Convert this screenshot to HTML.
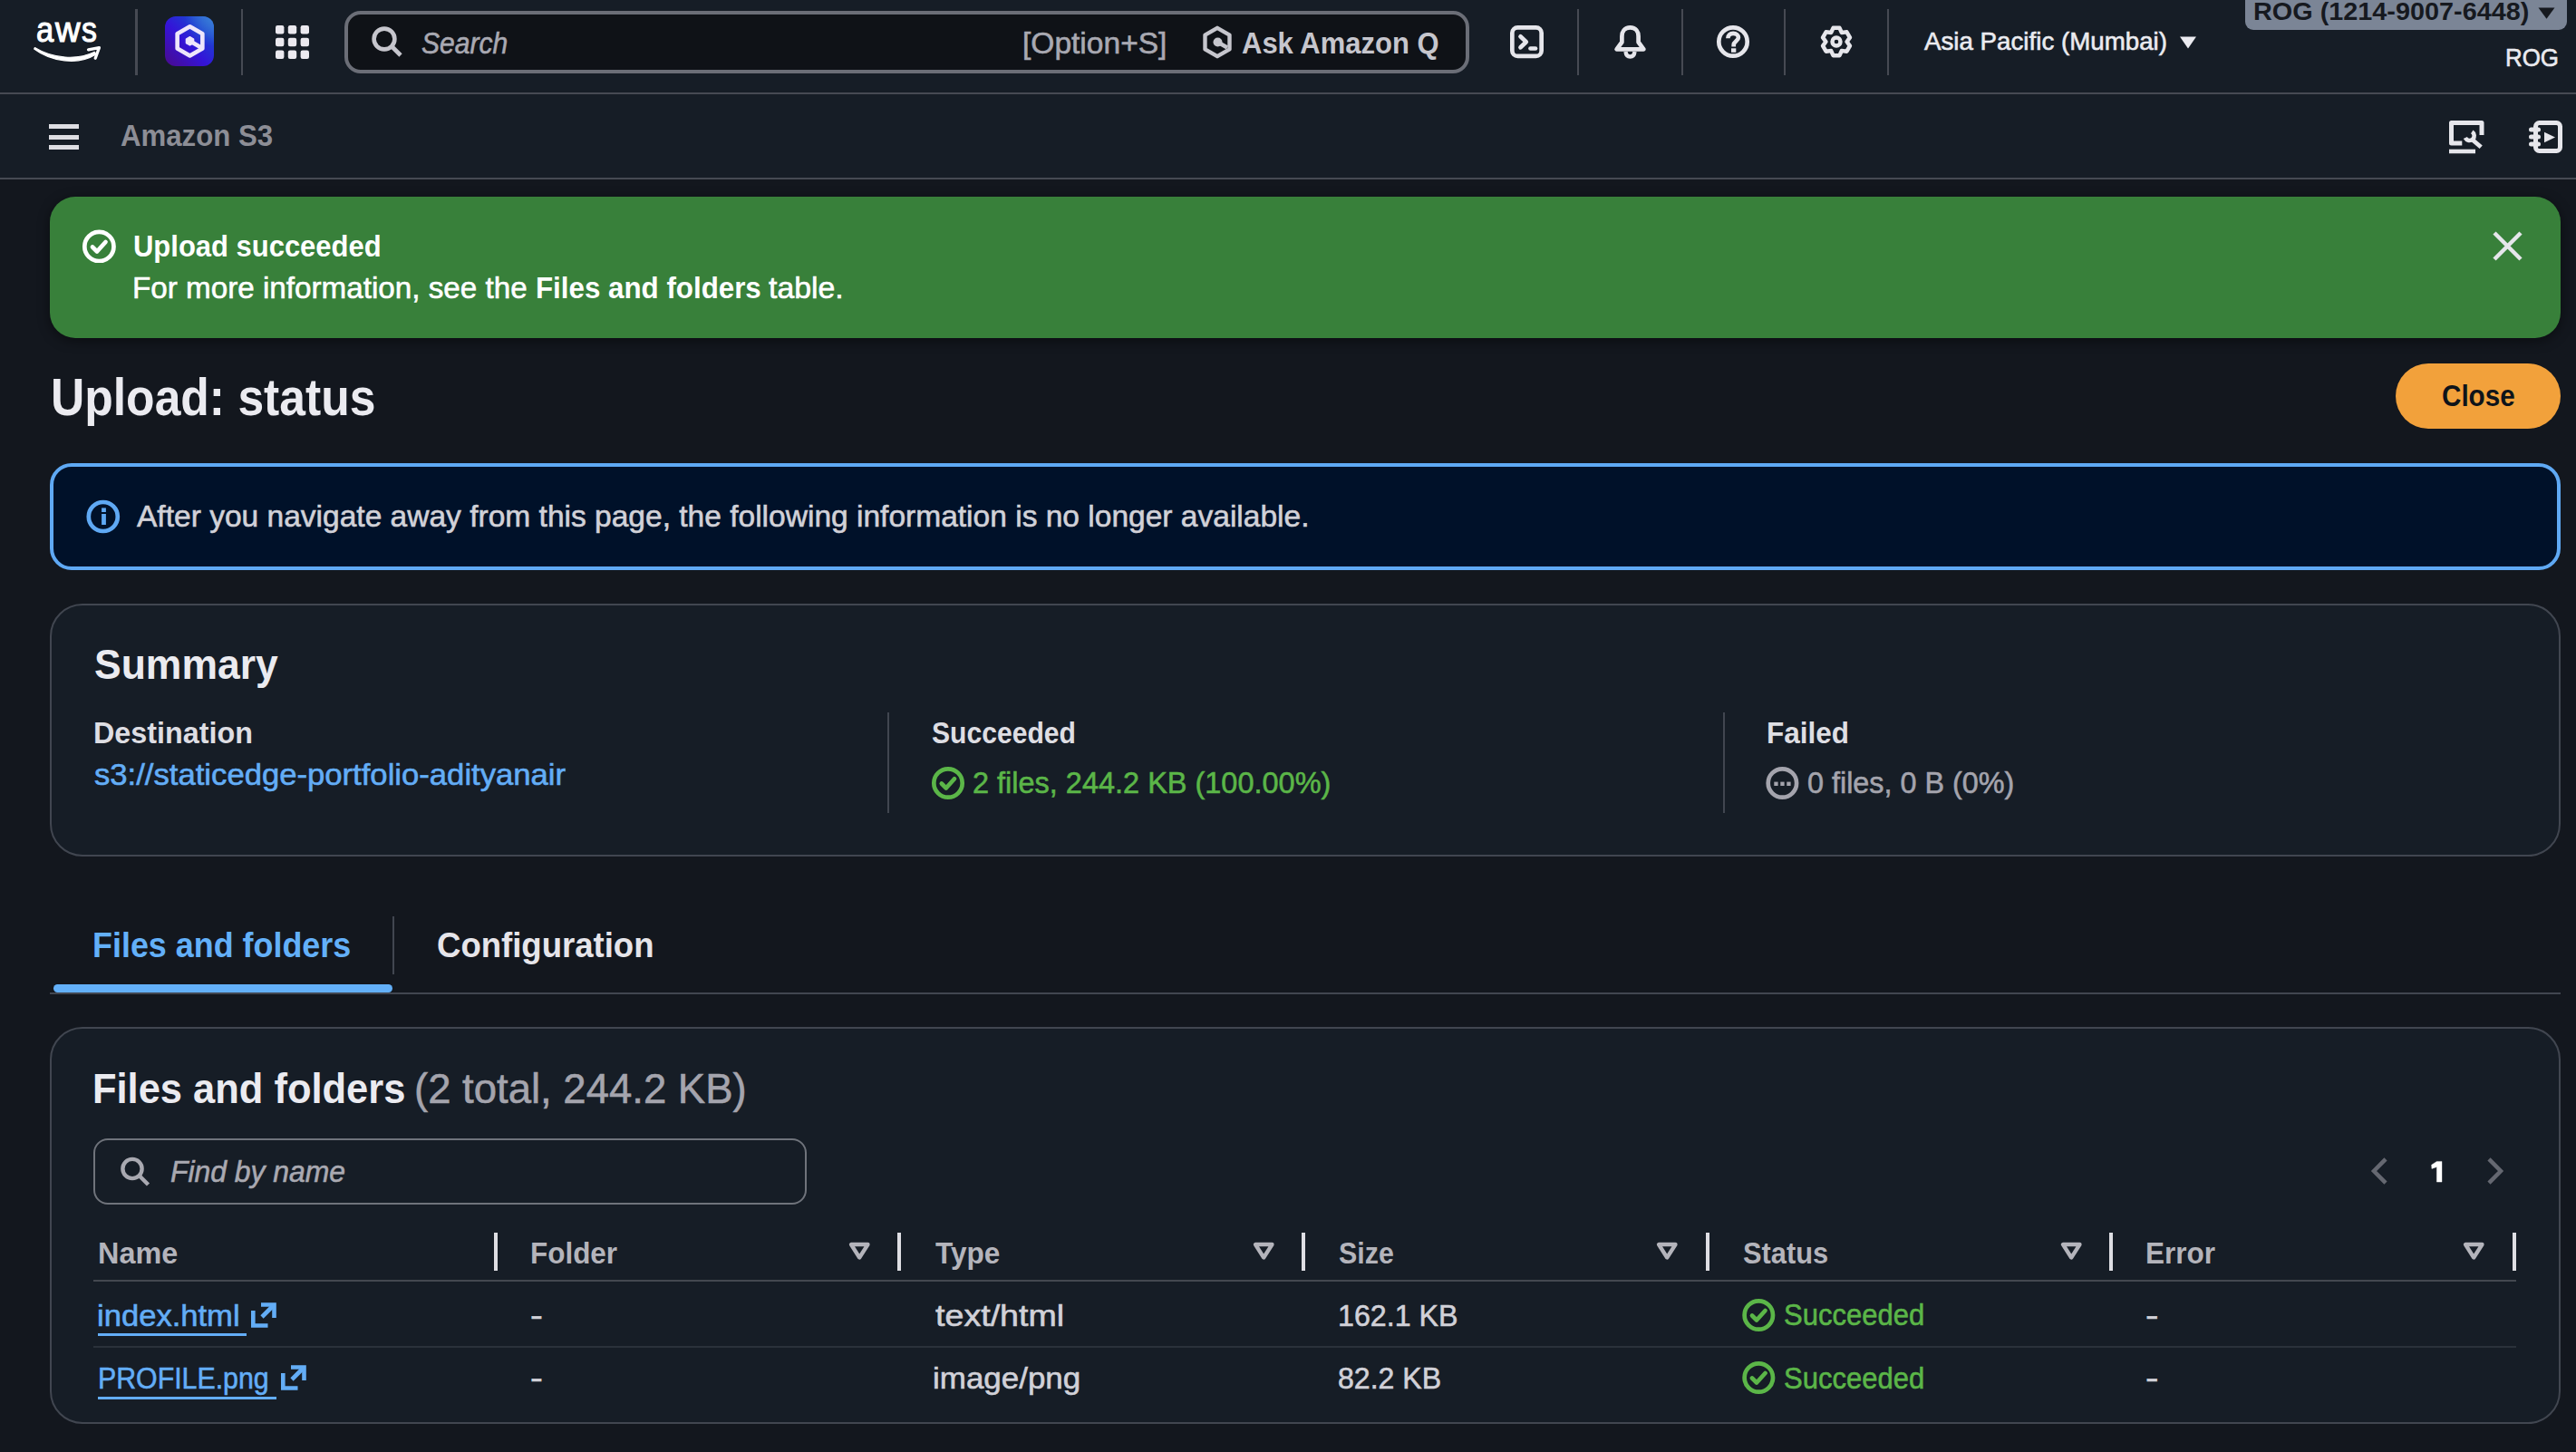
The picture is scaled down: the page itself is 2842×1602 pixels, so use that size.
<!DOCTYPE html>
<html><head><meta charset="utf-8"><title>Upload: status | S3</title>
<style>
html,body{margin:0;padding:0;}
body{width:2842px;height:1602px;overflow:hidden;position:relative;background:#13171e;font-family:'Liberation Sans', sans-serif;}
.a{position:absolute;box-sizing:border-box;}
.t{position:absolute;line-height:0;white-space:pre;transform-origin:0 0;}
svg{position:absolute;overflow:visible;}
</style></head><body>
<div class="a" style="left:0px;top:0px;width:2842px;height:102px;background:#161d26"></div>
<div class="a" style="left:0px;top:102px;width:2842px;height:2px;background:#464a53"></div>
<div class="a" style="left:0px;top:104px;width:2842px;height:92px;background:#161d26"></div>
<div class="a" style="left:0px;top:196px;width:2842px;height:2px;background:#464a53"></div>
<svg style="left:36px;top:20px;" width="80" height="52" viewBox="0 0 80 52">
<path d="M1.7 34 C 20 47.8, 50 52.5, 69.8 40 L 68.4 37.3 C 50 46.5, 22 45, 2.4 32.6 Z" fill="#fff" stroke="#fff" stroke-width="1.2" stroke-linejoin="round"/>
<path d="M61.5 34.8 L 73.4 32.6 L 69.2 44.2" fill="none" stroke="#fff" stroke-width="3.3" stroke-linecap="round" stroke-linejoin="round"/>
</svg>
<div class="a" style="left:149px;top:10px;width:3px;height:73px;background:#464a53"></div>
<div class="a" style="left:266px;top:10px;width:2px;height:73px;background:#464a53"></div>
<svg style="left:182px;top:18px;" width="54" height="55" viewBox="0 0 54 55">
<defs><linearGradient id="qg" x1="1" y1="0" x2="0" y2="1">
<stop offset="0" stop-color="#2f70d2"/><stop offset="0.28" stop-color="#1f3ad2"/><stop offset="0.55" stop-color="#3414d8"/><stop offset="1" stop-color="#4a0a8c"/></linearGradient>
<radialGradient id="qr" cx="1" cy="0" r="0.6"><stop offset="0" stop-color="#3a80d8" stop-opacity="0.9"/><stop offset="1" stop-color="#3a80d8" stop-opacity="0"/></radialGradient></defs>
<rect x="0" y="0" width="54" height="55" rx="12" fill="url(#qg)"/>
<rect x="0" y="0" width="54" height="55" rx="12" fill="url(#qr)"/>
<path d="M27.5 11.25 L41.35 19.3 L41.35 35.4 L27.5 43.45 L13.65 35.4 L13.65 19.3 Z" fill="none" stroke="#eee6fb" stroke-width="4.6" stroke-linejoin="round"/>
<path d="M27.5 22.6 L31.6 25 L31.6 29.6 L27.5 32 L23.4 29.6 L23.4 25 Z" fill="#eee6fb" stroke="#eee6fb" stroke-width="1.4" stroke-linejoin="round"/>
<path d="M27.5 27.3 L39.5 34.2" stroke="#eee6fb" stroke-width="4.6"/>
</svg>
<svg style="left:304px;top:27.9px;" width="38" height="38" viewBox="0 0 38 38"><rect x="0.0" y="0.0" width="9.4" height="9.4" rx="2.2" fill="#ebe9ef"/><rect x="13.8" y="0.0" width="9.4" height="9.4" rx="2.2" fill="#ebe9ef"/><rect x="27.6" y="0.0" width="9.4" height="9.4" rx="2.2" fill="#ebe9ef"/><rect x="0.0" y="13.8" width="9.4" height="9.4" rx="2.2" fill="#ebe9ef"/><rect x="13.8" y="13.8" width="9.4" height="9.4" rx="2.2" fill="#ebe9ef"/><rect x="27.6" y="13.8" width="9.4" height="9.4" rx="2.2" fill="#ebe9ef"/><rect x="0.0" y="27.6" width="9.4" height="9.4" rx="2.2" fill="#ebe9ef"/><rect x="13.8" y="27.6" width="9.4" height="9.4" rx="2.2" fill="#ebe9ef"/><rect x="27.6" y="27.6" width="9.4" height="9.4" rx="2.2" fill="#ebe9ef"/></svg>
<div class="a" style="left:380px;top:12px;width:1241px;height:69px;border:4px solid #6b6e77;border-radius:18px;background:#0f1217"></div>
<svg style="left:408px;top:27px;" width="40" height="40" viewBox="0 0 40 40">
<circle cx="16" cy="16" r="11.4" fill="none" stroke="#c6c6cd" stroke-width="4.6"/>
<path d="M24 24 L34 34" stroke="#c6c6cd" stroke-width="4.6"/>
</svg>
<svg style="left:1326px;top:28px;" width="34" height="37" viewBox="0 0 34 37">
<path d="M17 2.8 L30.5 10.6 L30.5 26.4 L17 34.2 L3.5 26.4 L3.5 10.6 Z" fill="none" stroke="#c6c6cd" stroke-width="4.4" stroke-linejoin="round"/>
<circle cx="17.5" cy="18.5" r="5" fill="#c6c6cd"/>
<path d="M17.5 18.5 L28 24.5" stroke="#c6c6cd" stroke-width="4.4"/>
</svg>
<svg style="left:1666px;top:28px;" width="37" height="37" viewBox="0 0 37 37">
<rect x="2.35" y="2.35" width="32.3" height="31.6" rx="6" fill="none" stroke="#e6e6eb" stroke-width="4.7"/>
<path d="M11.5 12.3 L17.8 18.2 L11.5 24.3" fill="none" stroke="#e6e6eb" stroke-width="4.7" stroke-linecap="round" stroke-linejoin="round"/>
<path d="M22.5 25.5 L28 25.5" stroke="#e6e6eb" stroke-width="4.7" stroke-linecap="round"/>
</svg>
<div class="a" style="left:1740px;top:10px;width:2px;height:73px;background:#464a53"></div>
<svg style="left:1781px;top:28px;" width="35" height="37" viewBox="0 0 35 37">
<path d="M17.5 2.4 C 11 2.4, 8.4 7.5, 8.4 12 L 8.4 18.5 L 2.6 26.3 L 32.4 26.3 L 26.6 18.5 L 26.6 12 C 26.6 7.5, 24 2.4, 17.5 2.4 Z" fill="none" stroke="#e6e6eb" stroke-width="4.7" stroke-linejoin="round"/>
<path d="M12.5 29 C 13 33, 15 34.5, 17.5 34.5 C 20 34.5, 22 33, 22.5 29" fill="none" stroke="#e6e6eb" stroke-width="4.4"/>
</svg>
<div class="a" style="left:1855px;top:10px;width:2px;height:73px;background:#464a53"></div>
<svg style="left:1894px;top:28px;" width="37" height="37" viewBox="0 0 37 37">
<circle cx="18" cy="18" r="15.7" fill="none" stroke="#e6e6eb" stroke-width="4.7"/>
<path d="M12.4 14.2 C12.4 10.6 14.8 8.9 18.2 8.9 C21.6 8.9 23.9 10.9 23.9 13.6 C23.9 17 18.7 17.6 18.7 21.6 L18.7 23.4" fill="none" stroke="#e6e6eb" stroke-width="4.7"/>
<rect x="16" y="25.3" width="5.3" height="4.5" fill="#e6e6eb"/>
</svg>
<div class="a" style="left:1968px;top:10px;width:2px;height:73px;background:#464a53"></div>
<svg style="left:2008px;top:28px;" width="37" height="37" viewBox="0 0 37 37">
<path d="M12.20 7.95 L14.49 2.80 L21.51 2.80 L23.80 7.95 L29.41 7.36 L32.92 13.44 L29.60 18.00 L32.92 22.56 L29.41 28.64 L23.80 28.05 L21.51 33.20 L14.49 33.20 L12.20 28.05 L6.59 28.64 L3.08 22.56 L6.40 18.00 L3.08 13.44 L6.59 7.36 Z" fill="none" stroke="#e6e6eb" stroke-width="4.5" stroke-linejoin="round"/>
<circle cx="18" cy="18" r="4.5" fill="none" stroke="#e6e6eb" stroke-width="4.4"/>
</svg>
<div class="a" style="left:2082px;top:10px;width:2px;height:73px;background:#464a53"></div>
<svg style="left:2404px;top:40px;" width="20" height="14" viewBox="0 0 20 14"><path d="M1 0.5 L19 0.5 L10 13.5 Z" fill="#ebebf0"/></svg>
<div class="a" style="left:2477px;top:-10px;width:355px;height:43px;background:#7b8596;border-radius:9px"></div>
<svg style="left:2800px;top:8px;" width="19" height="13" viewBox="0 0 19 13"><path d="M0.5 0.5 L18.5 0.5 L9.5 12.7 Z" fill="#16191f"/></svg>
<div class="a" style="left:54px;top:137.4px;width:33px;height:4.599999999999994px;background:#dedee3"></div>
<div class="a" style="left:54px;top:148.8px;width:33px;height:4.799999999999983px;background:#dedee3"></div>
<div class="a" style="left:54px;top:160.3px;width:33px;height:4.699999999999989px;background:#dedee3"></div>
<svg style="left:2700px;top:130px;" width="45" height="42" viewBox="0 0 45 42">
<path d="M16.3 28 L4.5 28 L4.5 5.5 L38 5.5 L38 19" fill="none" stroke="#e6e6eb" stroke-width="5" stroke-linejoin="round"/>
<path d="M2 37 L31 37" stroke="#e6e6eb" stroke-width="4.6"/>
<path d="M27.26 15.39 A5.2 5.2 0 1 1 19.83 22.08" fill="none" stroke="#e6e6eb" stroke-width="4.6"/>
<path d="M27.5 24 L37.2 32.3" stroke="#e6e6eb" stroke-width="4.8"/>
</svg>
<svg style="left:2788px;top:130px;" width="42" height="42" viewBox="0 0 42 42">
<rect x="9.5" y="5.5" width="27" height="31" rx="4" fill="none" stroke="#e6e6eb" stroke-width="5"/>
<path d="M4.5 13 L 12.5 13 M4.5 21 L12.5 21 M4.5 29 L12.5 29" stroke="#e6e6eb" stroke-width="5" stroke-linecap="round"/>
<path d="M19 15.7 L31 21.5 L19 27.2 Z" fill="#e6e6eb"/>
</svg>
<div class="a" style="left:55px;top:217px;width:2770px;height:155.5px;background:#38803a;border-radius:28px;box-shadow:0 3px 14px rgba(0,0,0,0.45)"></div>
<svg style="left:89px;top:252px;overflow:hidden;" width="40" height="38" viewBox="0 0 40 38">
<circle cx="20.4" cy="20" r="16.1" fill="none" stroke="#ffffff" stroke-width="4.7"/>
<path d="M13 20.5 L18 25.5 L27.5 15" fill="none" stroke="#ffffff" stroke-width="4.7" stroke-linecap="round" stroke-linejoin="round"/>
</svg>
<svg style="left:2749px;top:254px;" width="35" height="35" viewBox="0 0 35 35">
<path d="M3 3 L32 32 M32 3 L3 32" stroke="#e6e6eb" stroke-width="4.5"/>
</svg>
<div class="a" style="left:2643px;top:401px;width:182px;height:72px;background:#f2a13b;border-radius:36px"></div>
<div class="a" style="left:55px;top:511px;width:2770px;height:118px;background:#001129;border:4px solid #5fa9f4;border-radius:24px"></div>
<svg style="left:94px;top:550px;" width="40" height="40" viewBox="0 0 40 40">
<circle cx="19.8" cy="20" r="16" fill="none" stroke="#5fa9f4" stroke-width="4.7"/>
<rect x="18.1" y="17" width="4.8" height="12" fill="#5fa9f4"/>
<rect x="18.1" y="10.4" width="4.8" height="4.6" fill="#5fa9f4"/>
</svg>
<div class="a" style="left:55px;top:666px;width:2770px;height:279px;background:#161d26;border:2px solid #414650;border-radius:36px"></div>
<div class="a" style="left:979px;top:786px;width:2px;height:111px;background:#414650"></div>
<div class="a" style="left:1901px;top:786px;width:2px;height:111px;background:#414650"></div>
<svg style="left:1026px;top:844px;" width="40" height="40" viewBox="0 0 40 40">
<circle cx="20" cy="20" r="15.7" fill="none" stroke="#5bb648" stroke-width="4.7"/>
<path d="M12.8 20.5 L17.8 25.5 L27 15.2" fill="none" stroke="#5bb648" stroke-width="4.7" stroke-linecap="round" stroke-linejoin="round"/>
</svg>
<svg style="left:1946px;top:844px;" width="40" height="40" viewBox="0 0 40 40">
<circle cx="20.4" cy="20" r="15.7" fill="none" stroke="#a4a4ad" stroke-width="4.7"/>
<rect x="11.3" y="18.6" width="4.3" height="4.4" fill="#a4a4ad"/>
<rect x="18.3" y="18.6" width="4.3" height="4.4" fill="#a4a4ad"/>
<rect x="25.3" y="18.6" width="4.3" height="4.4" fill="#a4a4ad"/>
</svg>
<div class="a" style="left:433px;top:1011px;width:2px;height:64px;background:#414650"></div>
<div class="a" style="left:55px;top:1094.5px;width:2770px;height:2.0px;background:#414650"></div>
<div class="a" style="left:59px;top:1086px;width:374px;height:9px;background:#63b0f9;border-radius:5px"></div>
<div class="a" style="left:55px;top:1133px;width:2770px;height:438px;background:#161d26;border:2px solid #414650;border-radius:36px"></div>
<div class="a" style="left:103px;top:1256px;width:787px;height:73px;border:2px solid #6f737b;border-radius:16px;background:#161d26"></div>
<svg style="left:131px;top:1275px;" width="40" height="40" viewBox="0 0 40 40">
<circle cx="15" cy="14.5" r="10.6" fill="none" stroke="#a9a9b1" stroke-width="4.4"/>
<path d="M22.5 22 L32.5 32" stroke="#a9a9b1" stroke-width="4.4"/>
</svg>
<svg style="left:2612px;top:1274px;" width="26" height="36" viewBox="0 0 26 36"><path d="M20 4.8 L7 18 L20 31.2" fill="none" stroke="#656871" stroke-width="4.5"/></svg>
<svg style="left:2740px;top:1274px;" width="26" height="36" viewBox="0 0 26 36"><path d="M6 4.8 L19 18 L6 31.2" fill="none" stroke="#656871" stroke-width="4.5"/></svg>
<svg style="left:2680px;top:1280px;" width="16" height="26" viewBox="0 0 16 26"><path d="M8.4 1.4 L14 1.4 L14 24.1 L8.4 24.1 L8.4 7.6 L2.9 9.4 L2.6 5.2 Z" fill="#ffffff" stroke="#ffffff" stroke-width="0.4" stroke-linejoin="round"/></svg>
<div class="a" style="left:544.8px;top:1360px;width:4.400000000000091px;height:42px;background:#dedee3"></div>
<div class="a" style="left:989.8px;top:1360px;width:4.400000000000091px;height:42px;background:#dedee3"></div>
<div class="a" style="left:1435.8px;top:1360px;width:4.400000000000091px;height:42px;background:#dedee3"></div>
<div class="a" style="left:1881.8px;top:1360px;width:4.400000000000091px;height:42px;background:#dedee3"></div>
<div class="a" style="left:2326.8px;top:1360px;width:4.399999999999636px;height:42px;background:#dedee3"></div>
<div class="a" style="left:2771.8px;top:1360px;width:4.399999999999636px;height:42px;background:#dedee3"></div>
<svg style="left:936.2px;top:1370px;" width="25" height="21" viewBox="0 0 25 21"><path d="M3 3 L21.5 3 L12.2 17.5 Z" fill="none" stroke="#b4b4bb" stroke-width="4.3" stroke-linejoin="round"/></svg>
<svg style="left:1382.2px;top:1370px;" width="25" height="21" viewBox="0 0 25 21"><path d="M3 3 L21.5 3 L12.2 17.5 Z" fill="none" stroke="#b4b4bb" stroke-width="4.3" stroke-linejoin="round"/></svg>
<svg style="left:1827.2px;top:1370px;" width="25" height="21" viewBox="0 0 25 21"><path d="M3 3 L21.5 3 L12.2 17.5 Z" fill="none" stroke="#b4b4bb" stroke-width="4.3" stroke-linejoin="round"/></svg>
<svg style="left:2273.2px;top:1370px;" width="25" height="21" viewBox="0 0 25 21"><path d="M3 3 L21.5 3 L12.2 17.5 Z" fill="none" stroke="#b4b4bb" stroke-width="4.3" stroke-linejoin="round"/></svg>
<svg style="left:2717.2px;top:1370px;" width="25" height="21" viewBox="0 0 25 21"><path d="M3 3 L21.5 3 L12.2 17.5 Z" fill="none" stroke="#b4b4bb" stroke-width="4.3" stroke-linejoin="round"/></svg>
<div class="a" style="left:103px;top:1412px;width:2673px;height:2px;background:#434850"></div>
<div class="a" style="left:103px;top:1485px;width:2673px;height:2px;background:#2a313a"></div>
<div class="a" style="left:108px;top:1471px;width:164px;height:3px;background:#63adf6"></div>
<div class="a" style="left:108px;top:1541px;width:197px;height:3px;background:#63adf6"></div>
<svg style="left:276.8px;top:1436.8px;" width="28" height="28" viewBox="0 0 28 28">
<path d="M11 2.5 L25.5 2.5 L25.5 17" fill="none" stroke="#63adf6" stroke-width="4.6"/>
<path d="M25 3 L12 16" stroke="#63adf6" stroke-width="4.6"/>
<path d="M2.3 9 L2.3 25.5 L18.5 25.5" fill="none" stroke="#63adf6" stroke-width="4.6"/>
</svg>
<svg style="left:310px;top:1506.3px;" width="28" height="28" viewBox="0 0 28 28">
<path d="M11 2.5 L25.5 2.5 L25.5 17" fill="none" stroke="#63adf6" stroke-width="4.6"/>
<path d="M25 3 L12 16" stroke="#63adf6" stroke-width="4.6"/>
<path d="M2.3 9 L2.3 25.5 L18.5 25.5" fill="none" stroke="#63adf6" stroke-width="4.6"/>
</svg>
<svg style="left:1921px;top:1432.5px;" width="38" height="37" viewBox="0 0 38 37">
<circle cx="19.3" cy="18" r="15.7" fill="none" stroke="#5bb648" stroke-width="4.7"/>
<path d="M12 18.5 L17 23.5 L26.5 13" fill="none" stroke="#5bb648" stroke-width="4.7" stroke-linecap="round" stroke-linejoin="round"/>
</svg>
<svg style="left:1921px;top:1502px;" width="38" height="37" viewBox="0 0 38 37">
<circle cx="19.3" cy="18" r="15.7" fill="none" stroke="#5bb648" stroke-width="4.7"/>
<path d="M12 18.5 L17 23.5 L26.5 13" fill="none" stroke="#5bb648" stroke-width="4.7" stroke-linecap="round" stroke-linejoin="round"/>
</svg>
<div class="t" style="left:40.0px;top:33.1px;font-size:39px;font-weight:400;font-style:normal;color:#ffffff;transform:scaleX(0.8857);-webkit-text-stroke:0.6px currentColor;-webkit-text-stroke:1.1px #fff;">a</div>
<div class="t" style="left:61.2px;top:33.1px;font-size:39px;font-weight:400;font-style:normal;color:#ffffff;transform:scaleX(0.9783);-webkit-text-stroke:0.6px currentColor;-webkit-text-stroke:1.1px #fff;">w</div>
<div class="t" style="left:90.2px;top:33.1px;font-size:39px;font-weight:400;font-style:normal;color:#ffffff;transform:scaleX(0.8667);-webkit-text-stroke:0.6px currentColor;-webkit-text-stroke:1.1px #fff;">s</div>
<div class="t" style="left:464.8px;top:46.5px;font-size:34px;font-weight:400;font-style:italic;color:#a9a9b2;transform:scaleX(0.8837);-webkit-text-stroke:0.6px currentColor;">Search</div>
<div class="t" style="left:1128.0px;top:46.5px;font-size:34px;font-weight:400;font-style:normal;color:#a9a9b2;transform:scaleX(0.9864);-webkit-text-stroke:0.6px currentColor;">[Option+S]</div>
<div class="t" style="left:1370.0px;top:47.0px;font-size:34px;font-weight:700;font-style:normal;color:#c6c6cd;transform:scaleX(0.9115);">Ask Amazon Q</div>
<div class="t" style="left:2122.5px;top:44.8px;font-size:28.5px;font-weight:400;font-style:normal;color:#ebebf0;transform:scaleX(0.9724);-webkit-text-stroke:0.6px currentColor;">Asia Pacific (Mumbai)</div>
<div class="t" style="left:2486.0px;top:12.8px;font-size:28px;font-weight:700;font-style:normal;color:#16191f;transform:scaleX(1.0293);">ROG (1214-9007-6448)</div>
<div class="t" style="left:2764.2px;top:64.3px;font-size:28px;font-weight:400;font-style:normal;color:#ebebf0;transform:scaleX(0.9250);-webkit-text-stroke:0.6px currentColor;">ROG</div>
<div class="t" style="left:132.9px;top:150.4px;font-size:33px;font-weight:700;font-style:normal;color:#8d8e96;transform:scaleX(0.9452);">Amazon S3</div>
<div class="t" style="left:146.5px;top:270.9px;font-size:34px;font-weight:700;font-style:normal;color:#ffffff;transform:scaleX(0.9108);">Upload succeeded</div>
<div class="t" style="left:146.3px;top:317.0px;font-size:34px;font-weight:400;font-style:normal;color:#ffffff;transform:scaleX(0.9768);-webkit-text-stroke:0.6px currentColor;">For more information, see the</div>
<div class="t" style="left:591.0px;top:317.0px;font-size:34px;font-weight:700;font-style:normal;color:#ffffff;transform:scaleX(0.9208);">Files and folders</div>
<div class="t" style="left:848.2px;top:317.0px;font-size:34px;font-weight:400;font-style:normal;color:#ffffff;transform:scaleX(0.9947);-webkit-text-stroke:0.6px currentColor;">table.</div>
<div class="t" style="left:55.9px;top:438.0px;font-size:57px;font-weight:700;font-style:normal;color:#ebebf0;transform:scaleX(0.9053);">Upload: status</div>
<div class="t" style="left:2694.1px;top:436.2px;font-size:34px;font-weight:700;font-style:normal;color:#0f141a;transform:scaleX(0.8712);">Close</div>
<div class="t" style="left:150.9px;top:569.4px;font-size:34px;font-weight:400;font-style:normal;color:#d1d1d8;transform:scaleX(0.9862);-webkit-text-stroke:0.6px currentColor;">After you navigate away from this page, the following information is no longer available.</div>
<div class="t" style="left:103.5px;top:733.2px;font-size:46px;font-weight:700;font-style:normal;color:#ebebf0;transform:scaleX(0.9672);">Summary</div>
<div class="t" style="left:102.6px;top:808.2px;font-size:34px;font-weight:700;font-style:normal;color:#dedee3;transform:scaleX(0.9501);">Destination</div>
<div class="t" style="left:103.9px;top:853.7px;font-size:34px;font-weight:400;font-style:normal;color:#63adf6;transform:scaleX(1.0193);-webkit-text-stroke:0.6px currentColor;">s3://staticedge-portfolio-adityanair</div>
<div class="t" style="left:1027.7px;top:808.2px;font-size:34px;font-weight:700;font-style:normal;color:#dedee3;transform:scaleX(0.8855);">Succeeded</div>
<div class="t" style="left:1073.3px;top:862.9px;font-size:34px;font-weight:400;font-style:normal;color:#5bb648;transform:scaleX(0.9551);-webkit-text-stroke:0.6px currentColor;">2 files, 244.2 KB (100.00%)</div>
<div class="t" style="left:1948.6px;top:808.2px;font-size:34px;font-weight:700;font-style:normal;color:#dedee3;transform:scaleX(0.9261);">Failed</div>
<div class="t" style="left:1994.2px;top:863.2px;font-size:34px;font-weight:400;font-style:normal;color:#a4a4ad;transform:scaleX(0.9514);-webkit-text-stroke:0.6px currentColor;">0 files, 0 B (0%)</div>
<div class="t" style="left:101.9px;top:1043.1px;font-size:38px;font-weight:700;font-style:normal;color:#63b0f9;transform:scaleX(0.9447);">Files and folders</div>
<div class="t" style="left:482.4px;top:1043.1px;font-size:38px;font-weight:700;font-style:normal;color:#e6e5ea;transform:scaleX(0.9616);">Configuration</div>
<div class="t" style="left:102.3px;top:1201.1px;font-size:47px;font-weight:700;font-style:normal;color:#ebebf0;transform:scaleX(0.9246);">Files and folders</div>
<div class="t" style="left:457.2px;top:1201.1px;font-size:47px;font-weight:400;font-style:normal;color:#a4a4ad;transform:scaleX(0.9680);-webkit-text-stroke:0.6px currentColor;">(2 total, 244.2 KB)</div>
<div class="t" style="left:187.5px;top:1292.3px;font-size:34px;font-weight:400;font-style:italic;color:#a9a9b1;transform:scaleX(0.9374);-webkit-text-stroke:0.6px currentColor;">Find by name</div>
<div class="t" style="left:107.6px;top:1381.6px;font-size:34px;font-weight:700;font-style:normal;color:#b4b4bb;transform:scaleX(0.9521);">Name</div>
<div class="t" style="left:585.2px;top:1381.6px;font-size:34px;font-weight:700;font-style:normal;color:#b4b4bb;transform:scaleX(0.9246);">Folder</div>
<div class="t" style="left:1031.5px;top:1381.6px;font-size:34px;font-weight:700;font-style:normal;color:#b4b4bb;transform:scaleX(0.9286);">Type</div>
<div class="t" style="left:1477.0px;top:1381.6px;font-size:34px;font-weight:700;font-style:normal;color:#b4b4bb;transform:scaleX(0.8939);">Size</div>
<div class="t" style="left:1923.0px;top:1381.6px;font-size:34px;font-weight:700;font-style:normal;color:#b4b4bb;transform:scaleX(0.9058);">Status</div>
<div class="t" style="left:2367.1px;top:1381.6px;font-size:34px;font-weight:700;font-style:normal;color:#b4b4bb;transform:scaleX(0.9270);">Error</div>
<div class="t" style="left:106.8px;top:1450.5px;font-size:34px;font-weight:400;font-style:normal;color:#63adf6;transform:scaleX(1.0171);-webkit-text-stroke:0.6px currentColor;">index.html</div>
<div class="t" style="left:584.8px;top:1450.5px;font-size:34px;font-weight:400;font-style:normal;color:#d1d1d8;transform:scaleX(1.2222);-webkit-text-stroke:0.6px currentColor;">-</div>
<div class="t" style="left:1031.5px;top:1450.5px;font-size:34px;font-weight:400;font-style:normal;color:#d1d1d8;transform:scaleX(1.1069);-webkit-text-stroke:0.6px currentColor;">text/html</div>
<div class="t" style="left:1476.1px;top:1450.5px;font-size:34px;font-weight:400;font-style:normal;color:#d1d1d8;transform:scaleX(0.9471);-webkit-text-stroke:0.6px currentColor;">162.1 KB</div>
<div class="t" style="left:1968.1px;top:1450.4px;font-size:34px;font-weight:400;font-style:normal;color:#5bb648;transform:scaleX(0.9120);-webkit-text-stroke:0.6px currentColor;">Succeeded</div>
<div class="t" style="left:2366.7px;top:1450.5px;font-size:34px;font-weight:400;font-style:normal;color:#d1d1d8;transform:scaleX(1.2778);-webkit-text-stroke:0.6px currentColor;">-</div>
<div class="t" style="left:107.7px;top:1520.3px;font-size:34px;font-weight:400;font-style:normal;color:#63adf6;transform:scaleX(0.8915);-webkit-text-stroke:0.6px currentColor;">PROFILE.png</div>
<div class="t" style="left:584.8px;top:1520.3px;font-size:34px;font-weight:400;font-style:normal;color:#d1d1d8;transform:scaleX(1.2222);-webkit-text-stroke:0.6px currentColor;">-</div>
<div class="t" style="left:1029.4px;top:1520.3px;font-size:34px;font-weight:400;font-style:normal;color:#d1d1d8;transform:scaleX(1.0280);-webkit-text-stroke:0.6px currentColor;">image/png</div>
<div class="t" style="left:1476.1px;top:1520.3px;font-size:34px;font-weight:400;font-style:normal;color:#d1d1d8;transform:scaleX(0.9434);-webkit-text-stroke:0.6px currentColor;">82.2 KB</div>
<div class="t" style="left:1968.1px;top:1520.3px;font-size:34px;font-weight:400;font-style:normal;color:#5bb648;transform:scaleX(0.9120);-webkit-text-stroke:0.6px currentColor;">Succeeded</div>
<div class="t" style="left:2366.7px;top:1520.3px;font-size:34px;font-weight:400;font-style:normal;color:#d1d1d8;transform:scaleX(1.2778);-webkit-text-stroke:0.6px currentColor;">-</div>
</body></html>
